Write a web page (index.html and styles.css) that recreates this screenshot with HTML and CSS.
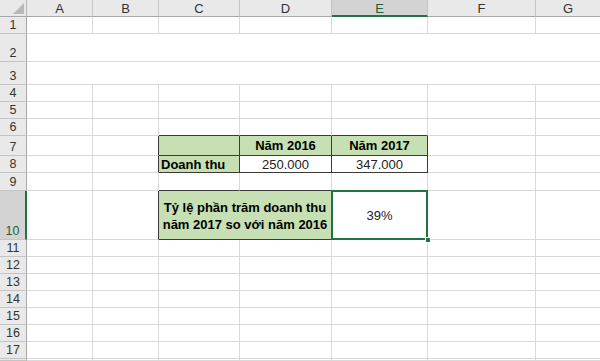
FILE: index.html
```html
<!DOCTYPE html>
<html>
<head>
<meta charset="utf-8">
<link rel="stylesheet" href="styles.css">
</head>
<body>
<div class="sheet">
  <div class="corner"><svg width="11" height="11" viewBox="0 0 11 11"><polygon points="11,0 11,11 0,11" fill="#b9b9b9"/></svg></div>
  <div class="ch">A</div><div class="ch">B</div><div class="ch">C</div><div class="ch">D</div><div class="ch ch-sel">E</div><div class="ch">F</div><div class="ch last">G</div>

  <div class="rh">1</div><div class="c"></div><div class="c"></div><div class="c"></div><div class="c"></div><div class="c"></div><div class="c"></div><div class="c last"></div>
  <div class="rh">2</div><div class="c wide"></div>
  <div class="rh">3</div><div class="c wide"></div>
  <div class="rh">4</div><div class="c"></div><div class="c"></div><div class="c"></div><div class="c"></div><div class="c"></div><div class="c"></div><div class="c last"></div>
  <div class="rh">5</div><div class="c"></div><div class="c"></div><div class="c"></div><div class="c"></div><div class="c"></div><div class="c"></div><div class="c last"></div>
  <div class="rh">6</div><div class="c"></div><div class="c"></div><div class="c db"></div><div class="c db"></div><div class="c db"></div><div class="c"></div><div class="c last"></div>

  <div class="rh">7</div><div class="c"></div><div class="c dr"></div>
  <div class="c t green"></div><div class="c t green bold center">Năm 2016</div><div class="c t green bold center">Năm 2017</div>
  <div class="c"></div><div class="c last"></div>

  <div class="rh">8</div><div class="c"></div><div class="c dr"></div>
  <div class="c t green bold left">Doanh thu</div><div class="c t center num">250.000</div><div class="c t center num">347.000</div>
  <div class="c"></div><div class="c last"></div>

  <div class="rh">9</div><div class="c"></div><div class="c"></div><div class="c db"></div><div class="c db"></div><div class="c db"></div><div class="c"></div><div class="c last"></div>

  <div class="rh rh-sel">10</div><div class="c"></div><div class="c dr"></div>
  <div class="c t green bold center span2">Tỷ lệ phần trăm doanh thu<br>năm 2017 so với năm 2016</div>
  <div class="c t center num selected">39%</div>
  <div class="c"></div><div class="c last"></div>

  <div class="rh">11</div><div class="c"></div><div class="c"></div><div class="c"></div><div class="c"></div><div class="c"></div><div class="c"></div><div class="c last"></div>
  <div class="rh">12</div><div class="c"></div><div class="c"></div><div class="c"></div><div class="c"></div><div class="c"></div><div class="c"></div><div class="c last"></div>
  <div class="rh">13</div><div class="c"></div><div class="c"></div><div class="c"></div><div class="c"></div><div class="c"></div><div class="c"></div><div class="c last"></div>
  <div class="rh">14</div><div class="c"></div><div class="c"></div><div class="c"></div><div class="c"></div><div class="c"></div><div class="c"></div><div class="c last"></div>
  <div class="rh">15</div><div class="c"></div><div class="c"></div><div class="c"></div><div class="c"></div><div class="c"></div><div class="c"></div><div class="c last"></div>
  <div class="rh">16</div><div class="c"></div><div class="c"></div><div class="c"></div><div class="c"></div><div class="c"></div><div class="c"></div><div class="c last"></div>
  <div class="rh">17</div><div class="c"></div><div class="c"></div><div class="c"></div><div class="c"></div><div class="c"></div><div class="c"></div><div class="c last"></div>
  <div class="rh"></div><div class="c"></div><div class="c"></div><div class="c"></div><div class="c"></div><div class="c"></div><div class="c"></div><div class="c last"></div>
</div>
</body>
</html>
```

FILE: styles.css
```css
* { box-sizing: border-box; }
html, body { margin: 0; padding: 0; background: #ffffff; overflow: hidden; }
body { width: 600px; height: 361px; font-family: "Liberation Sans", Arial, sans-serif; }

.sheet {
  display: grid;
  grid-template-columns: 27px 66px 66px 81px 92px 96px 108px 64px;
  grid-template-rows: 17px 17px 28px 23px 17px 17px 17px 20px 17px 18px 49px 17px 17px 17px 17px 17px 17px 17px 2px;
  width: 600px;
  height: 361px;
  overflow: hidden;
}

.corner {
  background: #e9e9e9;
  border-right: 1px solid #b8b8b8;
  border-bottom: 1px solid #a8a8a8;
  display: flex;
  justify-content: flex-end;
  align-items: flex-end;
  padding: 0 2px 2px 0;
}

.ch {
  background: #e9e9e9;
  border-right: 1px solid #c4c4c4;
  border-bottom: 1px solid #a8a8a8;
  color: #333;
  font-size: 13px;
  display: flex;
  align-items: center;
  justify-content: center;
  padding-top: 1px;
}
.ch-sel {
  background: #d3d3d3;
  border-bottom: 2px solid #217346;
  color: #1f5e3a;
}

.rh {
  background: #e9e9e9;
  border-right: 1px solid #a8a8a8;
  border-bottom: 1px solid #c4c4c4;
  color: #333;
  font-size: 12.5px;
  display: flex;
  align-items: flex-end;
  justify-content: center;
  padding-bottom: 1px;
  line-height: 14px;
  overflow: hidden;
}
.rh-sel {
  background: #d3d3d3;
  border-right: 2px solid #217346;
  color: #1f5e3a;
}

.c {
  border-right: 1px solid #d9d9d9;
  border-bottom: 1px solid #d9d9d9;
  font-size: 13px;
  color: #000;
  display: flex;
  align-items: center;
}
.last { border-right: none; }
.wide { grid-column: span 7; border-right: none; }
.span2 { grid-column: span 2; }

.db { border-bottom-color: #3a3a3a; }
.dr { border-right-color: #3a3a3a; }
.t { border-right-color: #3a3a3a; border-bottom-color: #3a3a3a; }

.green { background: #c6e0b4; }
.bold { font-weight: bold; }
.center { justify-content: center; text-align: center; }
.left { justify-content: flex-start; padding-left: 2px; }
.num { color: #222; }
.span2 { line-height: 17px; padding-top: 1px; }

.selected { position: relative; }
.selected::before {
  content: "";
  position: absolute;
  top: -1px; left: -1px; right: -1px; bottom: -1px;
  border: 2px solid #217346;
}
.selected::after {
  content: "";
  position: absolute;
  right: -4px; bottom: -4px;
  width: 4px; height: 4px;
  background: #217346;
  border: 1px solid #fff;
  box-sizing: content-box;
}
```
